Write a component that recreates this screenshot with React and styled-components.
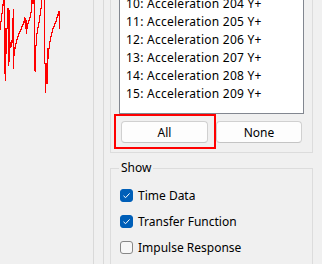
import styled, { createGlobalStyle } from 'styled-components'

const GlobalStyle = createGlobalStyle`
  html, body {
    margin: 0;
    padding: 0;
    background: #f0f0f0;
  }
  * {
    box-sizing: border-box;
  }
`

// pixel columns of the red trace: [x, top, bottom]
const trace = [
  [0, 21, 29], [1, 13, 21], [2, 4, 13], [3, -2, 5], [4, -2, 73], [5, 28, 80],
  [6, 28, 53], [7, 8, 28], [8, 8, 65], [9, 10, 61], [10, 42, 47], [11, 40, 46],
  [12, 18, 42], [13, 9, 68], [14, 47, 55], [15, 43, 48], [16, 39, 43],
  [17, 36, 39], [18, 33, 36], [19, 31, 33], [20, 29, 31], [21, 26, 29],
  [22, 24, 26], [23, 21, 24], [24, 17, 22], [25, 18, 28], [26, 20, 33],
  [27, 23, 28], [28, 20, 23], [29, 17, 20], [30, 12, 17], [31, -2, 12],
  [32, -2, 3], [33, -2, 3], [34, -2, 70], [35, 45, 71], [36, 33, 45],
  [37, 27, 33], [38, 22, 27], [39, 15, 22], [40, 8, 15], [41, -2, 8],
  [44, -2, 63], [45, 63, 92], [46, 63, 83], [47, 48, 83], [48, 48, 58],
  [49, 41, 48], [50, 36, 41], [51, 32, 36], [52, 28, 32], [53, 26, 28],
  [54, 23, 26], [55, 21, 23], [56, 17, 21], [57, 14, 17], [58, 11, 15],
  [59, 11, 28],
]

const channels = [10, 11, 12, 13, 14, 15].map(n => ({
  id: n,
  label: `${n}: Acceleration ${194 + n} Y+`,
}))

const options = [
  { label: 'Time Data', checked: true },
  { label: 'Transfer Function', checked: true },
  { label: 'Impulse Response', checked: false },
]

const App = () => {
  return (
    <Window>
      <GlobalStyle />
      <PlotPane>
        <svg width='93' height='264' shapeRendering='crispEdges'>
          {trace.map(([x, y1, y2]) => (
            <rect key={x} x={x} y={y1} width='1' height={y2 - y1 + 1} fill='#ff0000' />
          ))}
        </svg>
      </PlotPane>
      <Splitter />
      <SidePanel>
        <ChannelGroup>
          <ChannelList>
            <Rows>
              {channels.map(c => (
                <Row key={c.id}>{c.label}</Row>
              ))}
            </Rows>
          </ChannelList>
          <ButtonRow>
            <Highlight>
              <PushButton>All</PushButton>
            </Highlight>
            <PushButton>None</PushButton>
          </ButtonRow>
        </ChannelGroup>
        <ShowGroup>
          <Legend>Show</Legend>
          <Options>
            {options.map(o => (
              <Option key={o.label}>
                <Box $checked={o.checked}>
                  {o.checked && (
                    <svg width='13' height='13' viewBox='0 0 13 13'>
                      <path d='M3.5 6.8 L5.6 8.7 L9.6 4.4' fill='none' stroke='#fff' strokeWidth='1' />
                    </svg>
                  )}
                </Box>
                {o.label}
              </Option>
            ))}
          </Options>
        </ShowGroup>
      </SidePanel>
    </Window>
  )
}

export default App

const Window = styled.div`
  display: flex;
  width: 322px;
  height: 264px;
  overflow: hidden;
  background: #f0f0f0;
  font-family: 'Noto Sans', 'Open Sans', sans-serif;
  font-size: 12px;
  color: #000;
`

const PlotPane = styled.div`
  flex: none;
  width: 94px;
  border-right: 1px solid #d9d9d9;
  overflow: hidden;

  svg {
    display: block;
  }
`

const Splitter = styled.div`
  flex: none;
  width: 9px;
`

const SidePanel = styled.div`
  flex: 1;
  border-left: 1px solid #d9d9d9;
  padding: 0 9px 0 6px;
`

const ChannelGroup = styled.div`
  border: 1px solid #dcdcdc;
  border-top: none;
  padding: 0 8px 9px 8px;
`

const ChannelList = styled.div`
  height: 114px;
  background: #fff;
  border: 1px solid #828790;
  border-top: none;
  overflow: hidden;
`

const Rows = styled.div`
  margin-top: -5px;
  padding-left: 6px;
`

const Row = styled.div`
  height: 18px;
  line-height: 18px;
  letter-spacing: 0.25px;
  white-space: nowrap;
`

const ButtonRow = styled.div`
  display: grid;
  grid-template-columns: 87px 86px;
  column-gap: 8px;
  margin-top: 7px;
  padding: 0 1px 0 2px;
`

const Highlight = styled.div`
  position: relative;

  &::after {
    content: '';
    position: absolute;
    top: -7px;
    left: -7px;
    right: -8px;
    bottom: -6px;
    border: 2px solid #ff0000;
    pointer-events: none;
  }
`

const PushButton = styled.button`
  display: block;
  width: 100%;
  height: 22px;
  padding: 0;
  background: #fdfdfd;
  border: 1px solid #d0d0d0;
  border-bottom-color: #c4c4c4;
  border-radius: 4px;
  font-family: inherit;
  font-size: 12px;
  color: #000;
`

const ShowGroup = styled.fieldset`
  margin: 7px 0 0 0;
  min-width: 0;
  border: 1px solid #dcdcdc;
  padding: 0 9px 20px 9px;
`

const Legend = styled.legend`
  margin-left: -1px;
  padding: 0 2px;
  line-height: 16px;
`

const Options = styled.div`
  display: flex;
  flex-direction: column;
  gap: 13px;
  padding-top: 13px;
`

const Option = styled.label`
  display: flex;
  align-items: center;
  gap: 5px;
  height: 13px;
  white-space: nowrap;
`

const Box = styled.span`
  flex: none;
  width: 13px;
  height: 13px;
  border-radius: 3px;
  background: ${p => (p.$checked ? '#005fb8' : '#f7f7f7')};
  border: 1px solid ${p => (p.$checked ? '#005fb8' : '#878787')};

  svg {
    display: block;
    margin: -1px;
  }
`
